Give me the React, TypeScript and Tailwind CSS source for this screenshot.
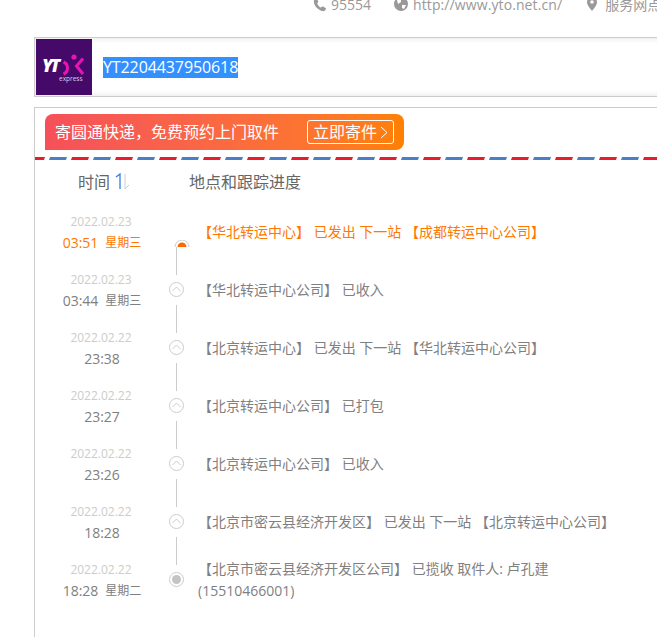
import React from "react";

const font = { fontFamily: '"Open Sans","Noto Sans CJK SC",sans-serif' };

function ChevronDot() {
  return (
    <svg width="15" height="15" viewBox="0 0 15 15" fill="none" className="block shrink-0">
      <circle cx="7.5" cy="7.5" r="7" stroke="#cccccc" />
      <path d="M3.5 9 L7.5 5 L11.5 9" stroke="#cccccc" />
    </svg>
  );
}

function FilledDot() {
  return (
    <svg width="15" height="15" viewBox="0 0 15 15" fill="none" className="block shrink-0">
      <circle cx="7.5" cy="7.5" r="7" stroke="#cccccc" />
      <circle cx="7.5" cy="7.5" r="4.5" fill="#c4c4c4" />
    </svg>
  );
}

function ActiveArc() {
  return (
    <svg width="22" height="7" viewBox="0 0 22 7" fill="none" className="block shrink-0">
      <path d="M6 7 A7 7 0 0 1 20 7" stroke="#cccccc" />
      <path d="M8.5 7 A4.5 4.5 0 0 1 17.5 7 Z" fill="#ff6a00" />
    </svg>
  );
}

type Row = { date: string; time: string; week?: string; text: string; kind: "active" | "chev" | "end" };

const rows: Row[] = [
  { date: "2022.02.23", time: "03:51", week: "星期三", text: "【华北转运中心】 已发出 下一站 【成都转运中心公司】", kind: "active" },
  { date: "2022.02.23", time: "03:44", week: "星期三", text: "【华北转运中心公司】 已收入", kind: "chev" },
  { date: "2022.02.22", time: "23:38", text: "【北京转运中心】 已发出 下一站 【华北转运中心公司】", kind: "chev" },
  { date: "2022.02.22", time: "23:27", text: "【北京转运中心公司】 已打包", kind: "chev" },
  { date: "2022.02.22", time: "23:26", text: "【北京转运中心公司】 已收入", kind: "chev" },
  { date: "2022.02.22", time: "18:28", text: "【北京市密云县经济开发区】 已发出 下一站 【北京转运中心公司】", kind: "chev" },
  { date: "2022.02.22", time: "18:28", week: "星期二", text: "【北京市密云县经济开发区公司】 已揽收 取件人: 卢孔建 (15510466001)", kind: "end" },
];

function TimelineRow({ r }: { r: Row }) {
  const active = r.kind === "active";
  return (
    <div className="flex h-[58px] items-center">
      <div className="w-[134px] shrink-0 pt-px text-center">
        <div className="pr-0.5 text-[12px] leading-5 text-[#cccccc]">{r.date}</div>
        <div className={`flex h-[22px] items-center justify-center gap-[7px] text-[14px] leading-5 ${active ? "text-[#ff7800]" : "text-[#808080]"}`}>
          <span>{r.time}</span>
          {r.week && <span className="text-[12px]">{r.week}</span>}
        </div>
      </div>
      <div className={`flex h-full w-[15px] shrink-0 flex-col self-start ${active ? "pt-[37px]" : "pt-[21px]"}`}>
        {r.kind === "active" && <ActiveArc />}
        {r.kind === "chev" && <ChevronDot />}
        {r.kind === "end" && <FilledDot />}
        {r.kind !== "end" && (
          <div className={`ml-[7px] h-7 w-px shrink-0 bg-[#cccccc] ${active ? "" : "mt-2"}`} />
        )}
      </div>
      <div className={`ml-[14px] w-[435px] shrink-0 text-[14px] leading-[22px] ${active ? "text-[#ff7800]" : "text-[#808080]"}`}>
        {r.text}
      </div>
    </div>
  );
}

export default function App() {
  return (
    <div className="h-[637px] w-[657px] overflow-hidden bg-white" style={font}>
      <div className="flex h-[37px] items-start whitespace-nowrap pl-[313px] text-[14px] text-[#999999]">
        <div className="-mt-[7px] flex h-[22px] items-center">
          <svg width="14" height="15" viewBox="0 0 14 15" fill="#999999" className="mr-1 shrink-0">
            <path d="M3 1 L5.5 4.5 L4.2 6.2 C4.6 8 6.2 9.8 8 10.6 L9.8 9.2 L13.2 11.5 L12 13.5 C10.8 14.6 8.5 14.3 6 12.6 C3 10.6 .8 7.4 .8 4.4 C.8 3 1.8 1.8 3 1 Z" />
          </svg>
          <span>95554</span>
          <svg width="14" height="14" viewBox="0 0 14 14" className="ml-[23px] mr-[5px] shrink-0">
            <circle cx="7" cy="7" r="7" fill="#999999" />
            <path d="M3 3 L7 2 L7 5 L4 7 Z M8 8 L12 8 L10 12 L8 11 Z" fill="#ffffff" />
          </svg>
          <span className="tracking-[0.1px]">http://www.yto.net.cn/</span>
          <svg width="10" height="14" viewBox="0 0 10 14" className="ml-[25px] mr-2 shrink-0">
            <path d="M5 0 C2.2 0 0 2.2 0 5 C0 8.5 5 14 5 14 C5 14 10 8.5 10 5 C10 2.2 7.8 0 5 0 Z" fill="#999999" />
            <circle cx="5" cy="5" r="1.8" fill="#ffffff" />
          </svg>
          <span>服务网点</span>
        </div>
      </div>

      <div className="ml-[34px] flex h-[60px] w-[700px] items-center border border-[#cccccc] pl-px shadow-[inset_0_0_6px_rgba(0,0,0,0.12)]">
        <div className="h-[56px] w-[56px] shrink-0 bg-[#45096a]">
          <svg width="56" height="56" viewBox="0 0 56 56">
            <text x="6" y="33" fill="#ffffff" fontSize="18" fontWeight="800" fontStyle="italic" fontFamily="Open Sans" letterSpacing="-2.5">YT</text>
            <circle cx="38" cy="18" r="2.6" fill="#e815b4" />
            <path d="M27.5 23 A6.5 6.5 0 0 1 27.5 35" fill="none" stroke="#e815b4" strokeWidth="3" />
            <path d="M47 19.5 L40.5 27 L47 35" fill="none" stroke="#e815b4" strokeWidth="3" />
            <text x="23" y="41.5" fill="#d9cfe2" fontSize="6.5" fontFamily="Open Sans">express</text>
          </svg>
        </div>
        <div className="ml-[11px] bg-[#3390ff] text-[16px] leading-[21px] tracking-[-0.1px] text-white">YT2204437950618</div>
      </div>

      <div className="ml-[34px] mt-[10px] min-h-[540px] w-[700px] border-l border-t border-[#cccccc]">
        <div className="ml-[10px] mt-[6px] flex h-9 w-[359px] items-center rounded-t-lg rounded-br-lg bg-gradient-to-r from-[#f5505a] to-[#ff8000] pl-[10px] text-[16px] text-white">
          <span>{"寄圆通快递\uFF0C免费预约上门取件"}</span>
          <div className="ml-7 flex h-[24px] w-[87px] shrink-0 items-center rounded-[3px] border border-white pl-[5px]">
            <span>立即寄件</span>
            <svg width="8" height="13" viewBox="0 0 8 13" fill="none" className="ml-[3px]">
              <path d="M1 1 L7 6.5 L1 12" stroke="#ffffff" />
            </svg>
          </div>
        </div>

        <svg width="623" height="3" className="mt-[7px] block">
          <defs>
            <pattern id="airmail" width="44" height="3" patternUnits="userSpaceOnUse" x="13">
              <polygon points="1,3 2,0 19,0 18,3" fill="#4a7fc7" />
              <polygon points="23,3 24,0 41,0 40,3" fill="#e81c2b" />
            </pattern>
          </defs>
          <rect width="623" height="3" fill="url(#airmail)" />
        </svg>

        <div className="flex h-[43px] items-center text-[16px] text-[#666666]">
          <span className="ml-[43px]">时间</span>
          <svg width="16" height="17" viewBox="0 0 16 17" fill="none" className="ml-[5px]">
            <path d="M1 4 L5 1 L5 16" stroke="#2f7fe8" strokeWidth="1.3" />
            <path d="M10 1 L10 16 L14 12" stroke="#cccccc" />
          </svg>
          <span className="ml-[58px]">地点和跟踪进度</span>
        </div>

        {rows.map((r, i) => (
          <TimelineRow key={i} r={r} />
        ))}
      </div>
    </div>
  );
}
